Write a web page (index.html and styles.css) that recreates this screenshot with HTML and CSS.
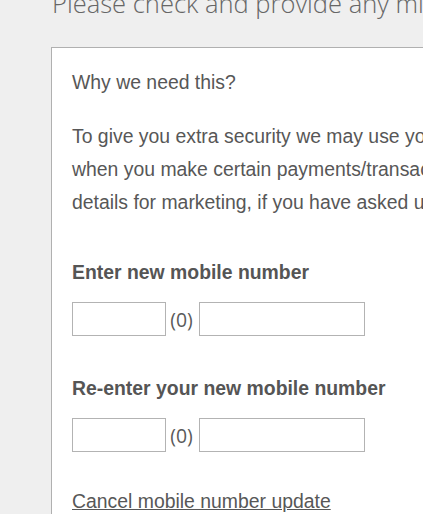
FILE: index.html
```html
<!DOCTYPE html>
<html lang="en">
<head>
<meta charset="utf-8">
<title>Update mobile number</title>
<link rel="stylesheet" href="styles.css">
</head>
<body>
<div class="page">
  <h1 class="page-title">Please check and provide any missing details</h1>
  <div class="card">
    <p class="why">Why we need this?</p>
    <p class="info">To give you extra security we may use your mobile number to send you a one-time passcode<br>when you make certain payments/transactions online. We won't use your mobile number or other<br>details for marketing, if you have asked us not to.</p>
    <div class="field">
      <label class="field-label">Enter new mobile number</label>
      <div class="phone-row">
        <input class="code" type="text" aria-label="Country code">
        <span class="zero">(0)</span>
        <input class="number" type="text" aria-label="Mobile number">
      </div>
    </div>
    <div class="field">
      <label class="field-label">Re-enter your new mobile number</label>
      <div class="phone-row">
        <input class="code" type="text" aria-label="Country code">
        <span class="zero">(0)</span>
        <input class="number" type="text" aria-label="Mobile number">
      </div>
    </div>
    <a class="cancel" href="#">Cancel mobile number update</a>
  </div>
</div>
</body>
</html>
```

FILE: styles.css
```css
html, body {
  margin: 0;
  padding: 0;
  background: #efefef;
  overflow: hidden;
}
body {
  width: 423px;
  height: 514px;
  font-family: "Liberation Sans", Arial, sans-serif;
  color: #575757;
}
.page {
  padding-left: 51px;
}
.page-title {
  margin: -14px 0 27px 1px;
  font-family: "Open Sans", "Noto Sans", sans-serif;
  font-weight: 300;
  font-size: 25.5px;
  line-height: 34px;
  color: #666666;
  white-space: nowrap;
}
.card {
  width: 900px;
  background: #ffffff;
  border: 1px solid #b0b0b0;
  padding: 18px 20px 40px 20px;
}
.why {
  margin: 0 0 21px;
  font-size: 19.4px;
  line-height: 33px;
}
.info {
  margin: 0;
  font-size: 19.4px;
  line-height: 33px;
  white-space: nowrap;
}
.field {
  margin-top: 37px;
}
.field + .field {
  margin-top: 36px;
}
.field-label {
  display: block;
  margin-bottom: 13px;
  font-size: 19.4px;
  line-height: 33px;
  font-weight: bold;
  color: #555555;
}
.phone-row {
  display: flex;
  align-items: flex-start;
  height: 34px;
}
.phone-row input {
  box-sizing: border-box;
  height: 34px;
  margin: 0;
  border: 1px solid #b3b3b3;
  border-radius: 0;
  background: #ffffff;
  font-family: "Liberation Sans", Arial, sans-serif;
  font-size: 16px;
  padding: 0 6px;
  outline: none;
}
.code {
  width: 94px;
}
.number {
  width: 166px;
}
.zero {
  box-sizing: border-box;
  width: 33px;
  padding: 6px 2px 0 0;
  text-align: center;
  line-height: 24px;
  font-family: "Open Sans", "Noto Sans", sans-serif;
  font-size: 19.4px;
  color: #5a5a5a;
}
.cancel {
  display: inline-block;
  margin-top: 33px;
  font-size: 19.4px;
  line-height: 33px;
  color: #575757;
  text-decoration: underline;
}
```
